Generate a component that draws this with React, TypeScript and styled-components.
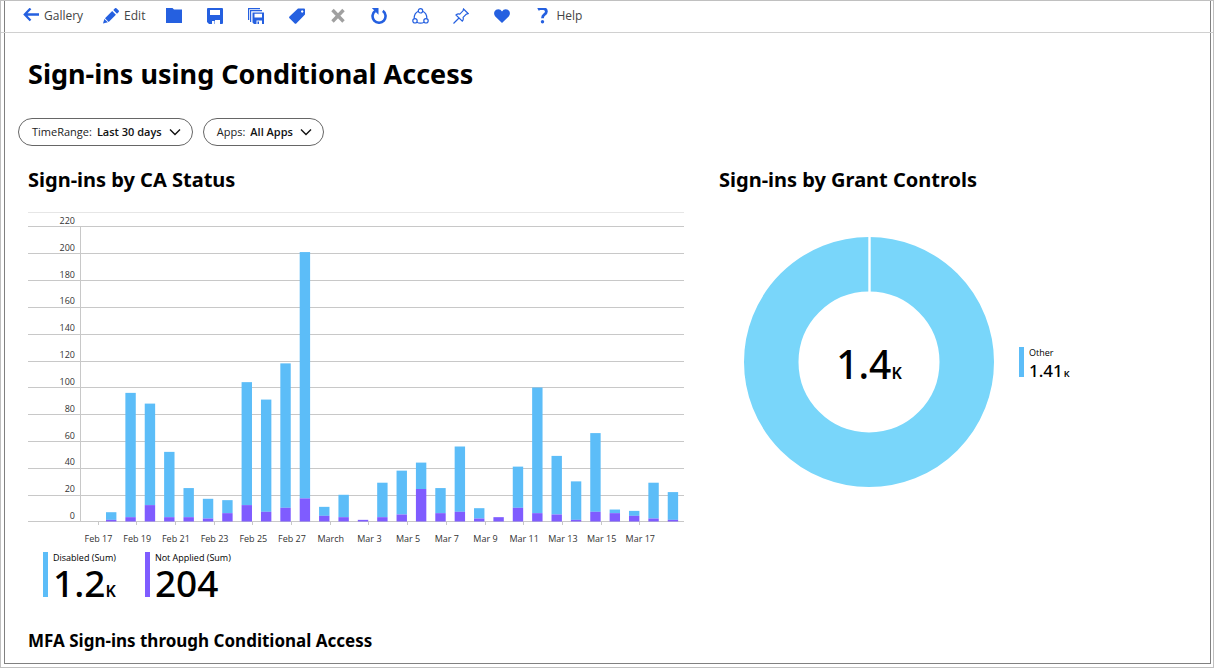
import React from 'react';
import styled, { createGlobalStyle } from 'styled-components';

const BLUE = '#5cbdf8';
const PURPLE = '#7f5cff';
const ACCENT = '#2560e0';

const GlobalStyle = createGlobalStyle`
  *, *::before, *::after { box-sizing: border-box; }
  body {
    margin: 0;
    background: #fff;
    color: #000;
    font-family: "Open Sans", "Noto Sans", sans-serif;
  }
`;

const Page = styled.div`
  display: flex;
  flex-direction: column;
  min-height: 100vh;
  padding: 0 2px 3px 3px;
  border: 1px solid #c0c0c0;
`;

const Frame = styled.div`
  flex: 1;
  border: 1px solid #808080;
  border-top: 0;
`;

const Toolbar = styled.nav`
  display: flex;
  align-items: center;
  height: 32px;
  margin: 0 -3px 0 -4px;
  padding: 0 14px 1px 17px;
  border-bottom: 1px solid #d0d0d0;
`;

const ToolButton = styled.button<{ $wide?: boolean }>`
  display: flex;
  align-items: center;
  gap: 5px;
  min-width: 41px;
  height: 28px;
  margin-right: ${(p) => (p.$wide ? '10px' : '0')};
  padding: 0 5px;
  border: 0;
  background: none;
  color: #444;
  font-family: inherit;
  font-size: 12px;
  line-height: 16px;
  cursor: pointer;

  &:disabled { cursor: default; }
  svg { flex: none; display: block; }
`;

const IconGroup = styled.div`
  display: flex;
  margin-left: 1px;
`;

const Title = styled.h1`
  margin: 0;
  padding: 21px 23px 0;
  font-family: "Noto Sans", sans-serif;
  font-size: 27px;
  font-weight: 700;
  line-height: 40px;
`;

const Filters = styled.div`
  display: flex;
  flex-wrap: wrap;
  gap: 10px;
  padding: 24px 13px 0;
`;

const Pill = styled.label`
  display: flex;
  align-items: center;
  gap: 5px;
  height: 28px;
  padding: 0 11px 0 13px;
  border: 1px solid #666;
  border-radius: 14px;
  font-size: 11px;
  line-height: 16px;
  color: #222;
`;

const PillSelect = styled.select`
  appearance: none;
  field-sizing: content;
  margin: 0 2px 0 0;
  padding: 0;
  border: 0;
  background: none;
  color: #111;
  font-family: inherit;
  font-size: 11px;
  font-weight: 600;
  line-height: 16px;
`;

const Panels = styled.div`
  display: flex;
  flex-wrap: wrap;
  gap: 35px;
  padding: 20px 23px 0;
`;

const Panel = styled.section<{ $basis: number }>`
  flex: 0 1 ${(p) => p.$basis}px;
  min-width: 0;
`;

const PanelTitle = styled.h2`
  margin: 0;
  font-family: "Noto Sans", sans-serif;
  font-size: 20px;
  font-weight: 700;
  line-height: 28px;
`;

const BarSvg = styled.svg`
  display: block;
  width: 100%;
  height: auto;
  margin-top: 18px;
`;

const Axis = styled.text`
  font-size: 9px;
  fill: #333;
`;

const Legend = styled.div`
  display: flex;
  gap: 29px;
  padding: 0 15px;
`;

const LegendItem = styled.div<{ $color: string; $compact?: boolean }>`
  height: ${(p) => (p.$compact ? '30px' : '45px')};
  padding-left: 5px;
  border-left: 5px solid ${(p) => p.$color};
  white-space: nowrap;
`;

const LegendLabel = styled.div`
  font-size: 9px;
  line-height: 12px;
`;

const LegendValue = styled.div<{ $compact?: boolean }>`
  font-family: "Noto Sans", sans-serif;
  font-size: ${(p) => (p.$compact ? '17px' : '37px')};
  line-height: ${(p) => (p.$compact ? '23px' : '38px')};
  font-weight: 500;
`;

const Unit = styled.span<{ $compact?: boolean }>`
  margin-left: ${(p) => (p.$compact ? '1px' : '0')};
  font-size: ${(p) => (p.$compact ? '9px' : '16px')};
  font-weight: 600;
`;

const DonutRow = styled.div`
  display: flex;
  align-items: center;
  gap: 25px;
  padding: 43px 25px 0;
`;

const DonutSvg = styled.svg`
  display: block;
  flex: 0 1 250px;
  min-width: 0;
`;

const DonutText = styled.text`
  font-family: "Noto Sans", sans-serif;
  font-size: 39px;
  font-weight: 500;
`;

const FooterTitle = styled.h2`
  margin: 0;
  padding: 32px 23px 8px;
  font-family: "Noto Sans", sans-serif;
  font-size: 17px;
  font-weight: 700;
  line-height: 24px;
`;

type IconProps = { color?: string; children: React.ReactNode; width?: number };

const Icon = ({ color = ACCENT, children, width = 16 }: IconProps) => (
  <svg width={width} height="16" viewBox={`0 0 ${width} 16`} fill={color} aria-hidden="true">
    {children}
  </svg>
);

const ArrowIcon = () => (
  <Icon>
    <path d="M7.500.500 1.800 6.500l5.700 6M2 6.500h14" fill="none" stroke={ACCENT} strokeWidth="2.300" />
  </Icon>
);

const PencilIcon = () => (
  <Icon>
    <path d="M0 15.500l1.300-4.500L4.900 14.200zM2 10.300 9.200 3.100l3.700 3.700L5.700 14zM10.300 2 12 .300q.700-.600 1.400 0l2.300 2.300q.600.700 0 1.400L14 5.700z" />
  </Icon>
);

const FolderIcon = () => (
  <Icon>
    <path d="M0 0h6.500l1.500 1.500h8V15H0z" />
  </Icon>
);

const SaveIcon = () => (
  <Icon>
    <path
      fillRule="evenodd"
      d="M1 0h14q1 0 1 1v14q0 1-1 1h-2v-4H8v4H2l-2-2V1q0-1 1-1zM3 2v5h10V2zM5 13h2.500v3H5z"
    />
  </Icon>
);

const SaveAllIcon = () => (
  <Icon>
    <path d="M.600 12V.600H12M2.600 14V2.600H14" fill="none" stroke={ACCENT} strokeWidth="1.200" />
    <path
      fillRule="evenodd"
      d="M4.500 4.500H16V16h-2v-3.500H8.500V16H6l-1.500-1.500zM6.500 5.700v3.800h7.500V5.700zM9.500 13.500H11V16H9.500z"
    />
  </Icon>
);

const TagIcon = () => (
  <Icon>
    <path
      fillRule="evenodd"
      d="M9 .500h6q1 0 1 1v5L7.500 15.300q-1 1-2 0L.500 10.300q-.800-.900 0-1.800zM13.200 2.300a1.200 1.200 0 1 0 .010 0z"
    />
  </Icon>
);

const CloseIcon = () => (
  <Icon>
    <path d="M2.500 2l11 11.500M13.500 2l-11 11.500" stroke="#a0a0a0" strokeWidth="3.400" />
  </Icon>
);

const RefreshIcon = () => (
  <Icon>
    <path d="M11.800 2.900A6.500 6.500 0 1 1 4.300 2.900" fill="none" stroke={ACCENT} strokeWidth="2.600" />
    <path d="M.800 0h6.700v6.700z" />
  </Icon>
);

const ShareIcon = () => (
  <Icon width={17}>
    <g fill="none" stroke={ACCENT} strokeWidth="1.200">
      <circle cx="8.500" cy="2.800" r="2.200" />
      <circle cx="3" cy="12.800" r="2.200" />
      <circle cx="14" cy="12.800" r="2.200" />
      <path d="M6.400 3.300Q2 5.200 2.200 10.600M10.600 3.300Q15 5.200 14.800 10.600M4.800 14.200q3.700 1.900 7.400 0" />
    </g>
  </Icon>
);

const PinIcon = () => (
  <Icon>
    <path
      d="M10.500 1l4.700 4.600-1.800.500-3.300 3.300q.600 2.300-.800 3.800L3 7q1.700-1.500 3.800-.900L10 2.800zM6 10 .500 15.500"
      fill="none"
      stroke={ACCENT}
      strokeWidth="1.200"
    />
  </Icon>
);

const HeartIcon = () => (
  <Icon>
    <path d="M8 15 1.300 8.600Q-.600 6.300.500 3.600 1.700 1.200 4.300 1.200 6.700 1.200 8 3.600 9.300 1.200 11.700 1.200q2.600 0 3.800 2.400 1.100 2.700-.800 5z" />
  </Icon>
);

const HelpIcon = () => (
  <Icon>
    <path
      d="M3 1.500Q4.700.400 7.200.400q4.200.100 4.200 3.100 0 1.700-2.100 3.100Q7.500 7.800 7.500 10.200"
      fill="none"
      stroke={ACCENT}
      strokeWidth="2.800"
    />
    <circle cx="7.500" cy="13.700" r="1.700" />
  </Icon>
);

const Chevron = () => (
  <svg width="12" height="12" viewBox="0 0 12 12" aria-hidden="true">
    <path d="M1 3.500l5 5 5-5" fill="none" stroke="#111" strokeWidth="1.400" />
  </svg>
);

// One pair per day: total sign-ins, and the part of them that was "Not Applied".
const DAYS: [number, number][] = [
  [7, 1], [96, 3], [88, 12], [52, 3], [25, 3], [17, 2], [16, 6], [104, 12],
  [91, 7], [118, 10], [201, 17], [11, 4], [20, 3], [1, 1], [29, 3], [38, 5],
  [44, 24], [25, 6], [56, 7], [10, 2], [3, 3], [41, 10], [100, 6], [49, 5],
  [30, 1], [66, 7], [9, 6], [8, 4], [29, 2], [22, 1],
];

const DATES = [
  'Feb 17', 'Feb 19', 'Feb 21', 'Feb 23', 'Feb 25', 'Feb 27', 'March', 'Mar 3',
  'Mar 5', 'Mar 7', 'Mar 9', 'Mar 11', 'Mar 13', 'Mar 15', 'Mar 17',
];

const BASE = 310;
const SCALE = 295 / 220;

const BarChart = () => (
  <BarSvg viewBox="0 0 656 340" role="img" aria-label="Sign-ins by CA Status">
    <path d="M0 .5h656" stroke="#e6e6e6" />
    {Array.from({ length: 12 }, (_, i) => {
      const exact = BASE - i * 20 * SCALE;
      return (
        <g key={i}>
          <path d={`M0 ${Math.ceil(exact - 0.01) - 0.5}h656`} stroke="#c8c8c8" />
          <Axis x="47" y={Math.round(exact) - 3} textAnchor="end">{i * 20}</Axis>
        </g>
      );
    })}
    <path d="M52.500 15V310" stroke="#c8c8c8" />
    {DAYS.map(([total, part], i) => {
      const x = 78 + i * 19.37;
      const top = BASE - (total + 0.3) * SCALE;
      const split = BASE - (part + 0.6) * SCALE;
      return (
        <g key={i}>
          {total > part && <rect x={x} y={top} width="10.400" height={split - top} fill={BLUE} />}
          <rect x={x} y={split} width="10.400" height={BASE - split} fill={PURPLE} />
        </g>
      );
    })}
    <path d="M0 309.500h656" stroke="#c8c8c8" strokeOpacity="0.5" />
    {DATES.map((date, i) => {
      const x = 70.5 + i * 38.7;
      return (
        <g key={date}>
          <path d={`M${Math.round(x) - 0.5} 310v3`} stroke="#c8c8c8" />
          <Axis x={x} y="330" textAnchor="middle">{date}</Axis>
        </g>
      );
    })}
  </BarSvg>
);

const Donut = () => (
  <DonutSvg viewBox="0 0 250 250" role="img" aria-label="Sign-ins by Grant Controls">
    <circle cx="125" cy="125" r="97.750" fill="none" stroke="#79d6fa" strokeWidth="54.500" />
    <path d="M125.500 0v56" stroke="#fff" strokeWidth="2.400" />
    <DonutText x="125" y="142" textAnchor="middle">
      1.4<tspan fontSize="16" fontWeight="600">K</tspan>
    </DonutText>
  </DonutSvg>
);

const App = () => (
  <>
    <GlobalStyle />
    <Page>
      <Frame>
        <Toolbar aria-label="Workbook commands">
          <ToolButton $wide><ArrowIcon />Gallery</ToolButton>
          <ToolButton $wide><PencilIcon />Edit</ToolButton>
          <IconGroup>
            <ToolButton aria-label="Open"><FolderIcon /></ToolButton>
            <ToolButton aria-label="Save"><SaveIcon /></ToolButton>
            <ToolButton aria-label="Save as"><SaveAllIcon /></ToolButton>
            <ToolButton aria-label="Rename"><TagIcon /></ToolButton>
            <ToolButton aria-label="Delete" disabled><CloseIcon /></ToolButton>
            <ToolButton aria-label="Refresh"><RefreshIcon /></ToolButton>
            <ToolButton aria-label="Share"><ShareIcon /></ToolButton>
            <ToolButton aria-label="Pin"><PinIcon /></ToolButton>
            <ToolButton aria-label="Favorite"><HeartIcon /></ToolButton>
          </IconGroup>
          <ToolButton><HelpIcon />Help</ToolButton>
        </Toolbar>
        <main>
          <Title>Sign-ins using Conditional Access</Title>
          <Filters>
            <Pill>
              TimeRange:
              <PillSelect><option>Last 30 days</option></PillSelect>
              <Chevron />
            </Pill>
            <Pill>
              Apps:
              <PillSelect><option>All Apps</option></PillSelect>
              <Chevron />
            </Pill>
          </Filters>
          <Panels>
            <Panel $basis={656}>
              <PanelTitle>Sign-ins by CA Status</PanelTitle>
              <BarChart />
              <Legend>
                <LegendItem $color={BLUE}>
                  <LegendLabel>Disabled (Sum)</LegendLabel>
                  <LegendValue>1.2<Unit>K</Unit></LegendValue>
                </LegendItem>
                <LegendItem $color={PURPLE}>
                  <LegendLabel>Not Applied (Sum)</LegendLabel>
                  <LegendValue>204</LegendValue>
                </LegendItem>
              </Legend>
            </Panel>
            <Panel $basis={440}>
              <PanelTitle>Sign-ins by Grant Controls</PanelTitle>
              <DonutRow>
                <Donut />
                <LegendItem $color={BLUE} $compact>
                  <LegendLabel>Other</LegendLabel>
                  <LegendValue $compact>1.41<Unit $compact>K</Unit></LegendValue>
                </LegendItem>
              </DonutRow>
            </Panel>
          </Panels>
          <FooterTitle>MFA Sign-ins through Conditional Access</FooterTitle>
        </main>
      </Frame>
    </Page>
  </>
);

export default App;
